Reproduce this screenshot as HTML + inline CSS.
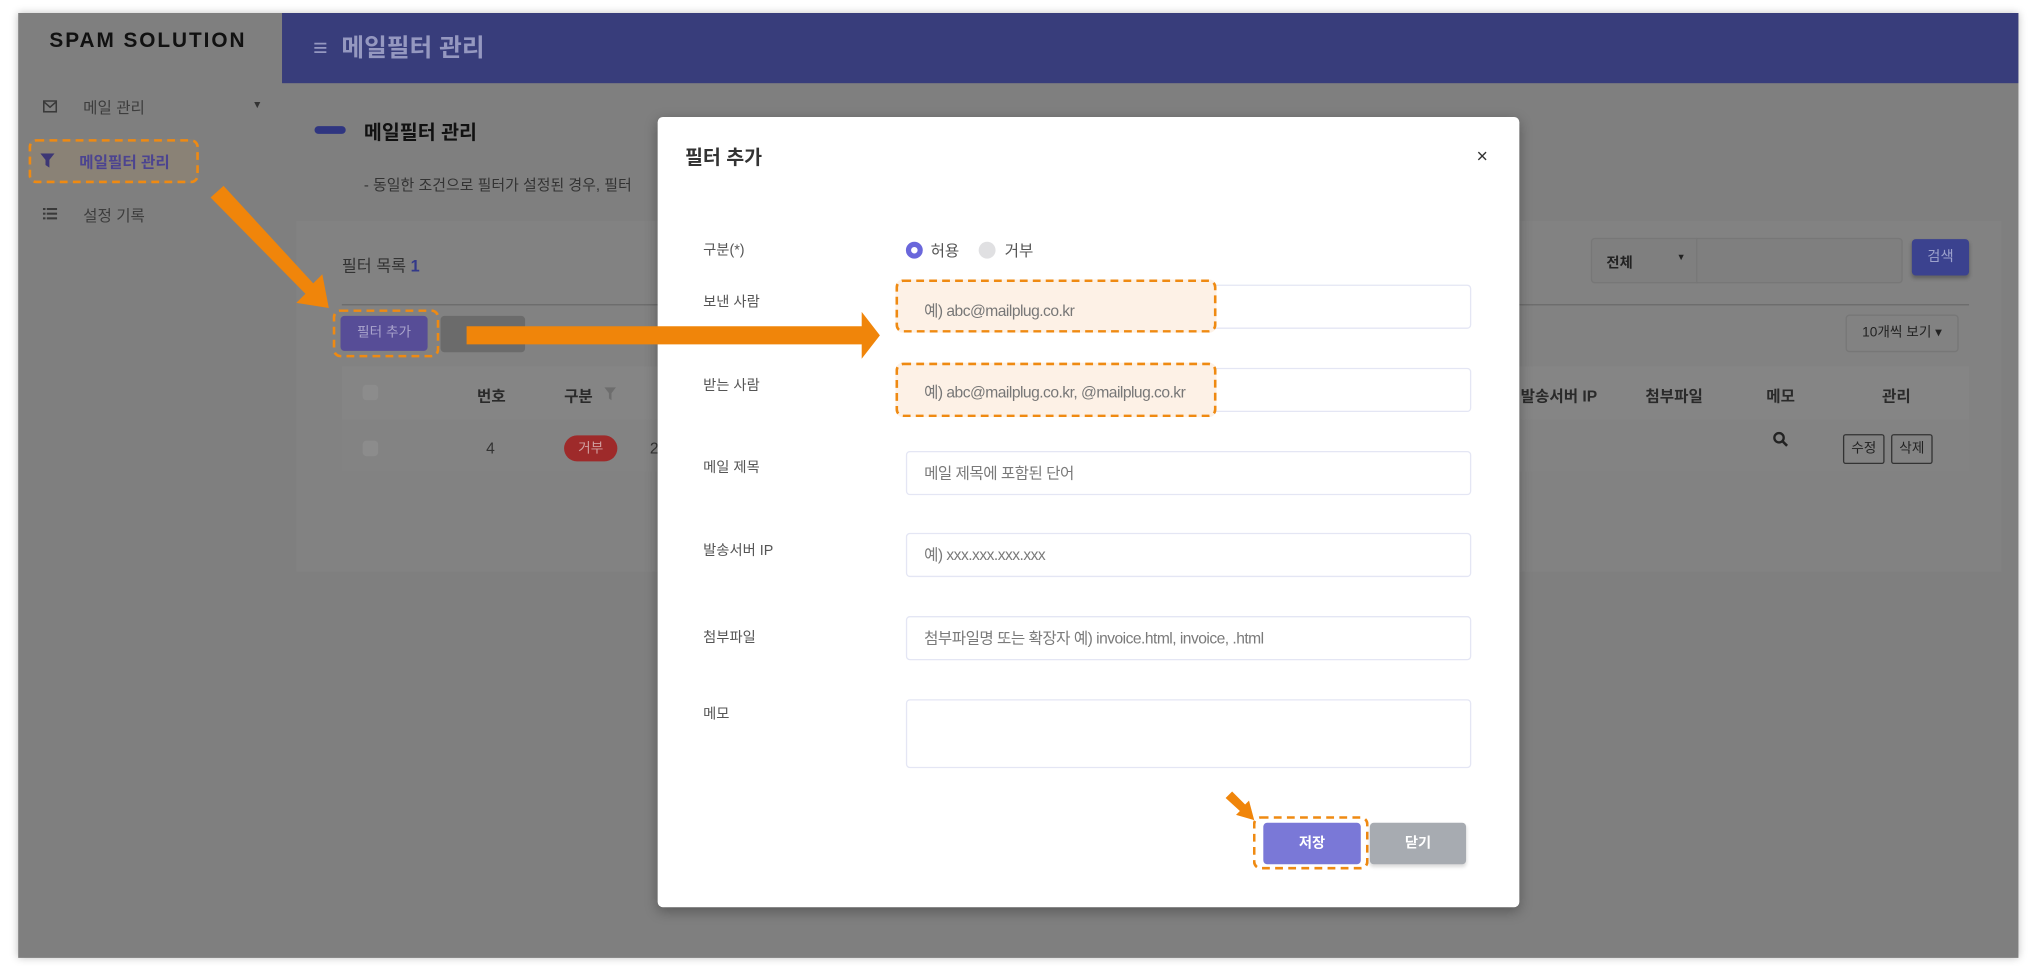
<!DOCTYPE html>
<html><head><meta charset="utf-8">
<style>
*{box-sizing:border-box;margin:0;padding:0}
html,body{width:2038px;height:971px;overflow:hidden;background:#fff}
body{font-family:"Liberation Sans","Noto Sans CJK KR",sans-serif}
#w{position:absolute;left:0;top:0;width:1568px;height:747px;transform:scale(1.2997);transform-origin:0 0}
.a{position:absolute}
.frame{left:14px;top:10px;width:1539px;height:727px;background:#7f7f7f;box-shadow:0 0 6px rgba(0,0,0,.25);overflow:hidden}
.t{position:absolute;white-space:nowrap}
.inp{position:absolute;left:191px;width:435px;height:34px;border:1px solid #e4e6f4;border-radius:3px;background:#fff;font-size:12px;letter-spacing:-0.4px;color:#7a7a7a;padding-left:13px;line-height:32px}
.lbl{position:absolute;left:35px;font-size:11px;color:#555}
.dash{position:absolute;border:2px dashed #ef8a12;border-radius:6px}
.ph{font-size:12px;letter-spacing:-0.4px;color:#777}
</style></head><body>
<div id="w">
<div class="a frame">
  <div class="t" style="left:24px;top:13px;font-size:16px;font-weight:bold;letter-spacing:1.5px;color:#111">SPAM SOLUTION</div>
  <div class="a" style="left:203px;top:0;width:1336px;height:54px;background:#383d7b"></div>
  <div class="t" style="left:227px;top:12px;font-size:19px;font-weight:bold;color:#9598c0">≡&nbsp; 메일필터 관리</div>
  <svg class="a" style="left:19px;top:67px" width="11" height="10" viewBox="0 0 11 10"><rect x="0.7" y="0.7" width="9.6" height="8.3" fill="none" stroke="#3a3a3a" stroke-width="1.2"/><path d="M1 1.5L5.5 5.5L10 1.5" fill="none" stroke="#3a3a3a" stroke-width="1.2"/></svg>
  <div class="t" style="left:50px;top:64px;font-size:12px;color:#3d3d3d">메일 관리</div>
  <div class="t" style="left:180px;top:66px;font-size:8px;color:#333">▼</div>
  <div class="dash" style="left:8px;top:97px;width:131px;height:34px;background:#8a8276"></div>
  <svg class="a" style="left:17px;top:108px" width="11" height="11" viewBox="0 0 11 11"><path d="M0 0H11L7 5V11L4 9V5Z" fill="#3d3775"/></svg>
  <div class="t" style="left:47px;top:106px;font-size:12px;font-weight:bold;color:#4c4490">메일필터 관리</div>
  <svg class="a" style="left:19px;top:150px" width="11" height="9" viewBox="0 0 11 9"><g fill="#3a3a3a"><rect x="0" y="0" width="2" height="1.6"/><rect x="3" y="0" width="8" height="1.6"/><rect x="0" y="3.6" width="2" height="1.6"/><rect x="3" y="3.6" width="8" height="1.6"/><rect x="0" y="7.2" width="2" height="1.6"/><rect x="3" y="7.2" width="8" height="1.6"/></g></svg>
  <div class="t" style="left:50px;top:147px;font-size:12px;color:#3d3d3d">설정 기록</div>
  <div class="a" style="left:228px;top:87px;width:24px;height:6px;border-radius:3px;background:#2f3580"></div>
  <div class="t" style="left:266px;top:81px;font-size:15px;font-weight:bold;color:#111">메일필터 관리</div>
  <div class="t" style="left:266px;top:124px;font-size:11.5px;color:#333">- 동일한 조건으로 필터가 설정된 경우, 필터</div>
  <div class="a" style="left:214px;top:160px;width:1312px;height:270px;background:#828282"></div>
  <div class="t" style="left:249px;top:184px;font-size:12.5px;color:#333">필터 목록 <b style="color:#33398a">1</b></div>
  <div class="a" style="left:249px;top:224px;width:1252px;height:1px;background:#6a6a6a"></div>
  <div class="a" style="left:1210px;top:173px;width:240px;height:35px;border:1px solid #777;border-radius:3px;background:#7f7f7f"></div>
  <div class="a" style="left:1291px;top:173px;width:1px;height:35px;background:#777"></div>
  <div class="t" style="left:1222px;top:184px;font-size:11px;font-weight:bold;color:#222">전체</div>
  <div class="t" style="left:1276px;top:185px;font-size:7px;color:#222">▼</div>
  <div class="a" style="left:1457px;top:174px;width:44px;height:28px;border-radius:3px;background:#3b428f;color:#9da2cc;font-size:11px;line-height:28px;text-align:center;box-shadow:0 2px 3px rgba(0,0,0,.25)">검색</div>
  <div class="a" style="left:1406px;top:232px;width:87px;height:29px;border:1px solid #777;border-radius:3px;font-size:10.5px;color:#222;line-height:27px;text-align:center">10개씩 보기 ▾</div>
  <div class="a" style="left:325px;top:233px;width:65px;height:28px;border-radius:3px;background:#6b6b6b"></div>
  <div class="dash" style="left:242px;top:228px;width:82px;height:37px"></div>
  <div class="a" style="left:248px;top:233px;width:67px;height:27px;border-radius:3px;background:#574d97;color:#aaa4cc;font-size:10.5px;line-height:27px;text-align:center">필터 추가</div>
  <div class="a" style="left:249px;top:272px;width:1252px;height:41px;background:#858585"></div>
  <div class="a" style="left:265px;top:286px;width:12px;height:12px;border-radius:3px;background:#8c8c8c"></div>
  <div class="t" style="left:353px;top:286px;font-size:12px;font-weight:bold;color:#2a2a2a">번호</div>
  <div class="t" style="left:420px;top:286px;font-size:12px;font-weight:bold;color:#2a2a2a">구분</div>
  <svg class="a" style="left:451px;top:288px" width="9" height="10" viewBox="0 0 9 10"><path d="M0 0H9L5.5 4.5V10L3.5 8.5V4.5Z" fill="#6d6d6d"/></svg>
  <div class="t" style="left:1156px;top:286px;font-size:12px;font-weight:bold;color:#2a2a2a">발송서버 IP</div>
  <div class="t" style="left:1252px;top:286px;font-size:12px;font-weight:bold;color:#2a2a2a">첨부파일</div>
  <div class="t" style="left:1345px;top:286px;font-size:12px;font-weight:bold;color:#2a2a2a">메모</div>
  <div class="t" style="left:1434px;top:286px;font-size:12px;font-weight:bold;color:#2a2a2a">관리</div>
  <div class="a" style="left:249px;top:313px;width:1252px;height:40px;background:#838383"></div>
  <div class="a" style="left:265px;top:329px;width:12px;height:12px;border-radius:3px;background:#8c8c8c"></div>
  <div class="t" style="left:360px;top:328px;font-size:12px;color:#333">4</div>
  <div class="a" style="left:420px;top:325px;width:41px;height:20px;border-radius:10px;background:#9e2a2a;color:#d0a0a0;font-size:10.5px;line-height:20px;text-align:center">거부</div>
  <div class="t" style="left:486px;top:328px;font-size:12px;color:#333">2</div>
  <svg class="a" style="left:1350px;top:322px" width="12" height="12" viewBox="0 0 12 12"><circle cx="4.8" cy="4.8" r="3.6" fill="none" stroke="#222" stroke-width="1.8"/><path d="M7.5 7.5L11 11" stroke="#222" stroke-width="2"/></svg>
  <div class="a" style="left:1404px;top:324px;width:32px;height:23px;border:1px solid #333;border-radius:2px;font-size:10.5px;color:#222;line-height:21px;text-align:center">수정</div>
  <div class="a" style="left:1441px;top:324px;width:32px;height:23px;border:1px solid #333;border-radius:2px;font-size:10.5px;color:#222;line-height:21px;text-align:center">삭제</div>
</div>
<div class="a" style="left:506px;top:90px;width:663px;height:608px;background:#fff;border-radius:4px;box-shadow:0 3px 10px rgba(0,0,0,.3)">
  <div class="t" style="left:21px;top:20px;font-size:15px;font-weight:bold;color:#333">필터 추가</div>
  <div class="t" style="left:630px;top:22px;font-size:15px;color:#333">×</div>
  <div class="lbl" style="top:94px">구분(*)</div>
  <div class="a" style="left:191px;top:96px;width:13px;height:13px;border-radius:50%;border:4px solid #6a67db;background:#fff"></div>
  <div class="t" style="left:210px;top:94px;font-size:12px;color:#555">허용</div>
  <div class="a" style="left:247px;top:96px;width:13px;height:13px;border-radius:50%;background:#e0e0e2"></div>
  <div class="t" style="left:267px;top:94px;font-size:12px;color:#555">거부</div>
  <div class="lbl" style="top:134px">보낸 사람</div>
  <div class="inp" style="top:129px"></div>
  <div class="dash" style="left:183px;top:125px;width:247px;height:41px;background:#fdf1e6"></div>
  <div class="t ph" style="left:205px;top:140px">예) abc@mailplug.co.kr</div>
  <div class="lbl" style="top:198px">받는 사람</div>
  <div class="inp" style="top:193px"></div>
  <div class="dash" style="left:183px;top:189px;width:247px;height:42px;background:#fdf1e6"></div>
  <div class="t ph" style="left:205px;top:203px">예) abc@mailplug.co.kr, @mailplug.co.kr</div>
  <div class="lbl" style="top:261px">메일 제목</div>
  <div class="inp" style="top:257px">메일 제목에 포함된 단어</div>
  <div class="lbl" style="top:325px">발송서버 IP</div>
  <div class="inp" style="top:320px">예) xxx.xxx.xxx.xxx</div>
  <div class="lbl" style="top:392px">첨부파일</div>
  <div class="inp" style="top:384px">첨부파일명 또는 확장자 예) invoice.html, invoice, .html</div>
  <div class="lbl" style="top:451px">메모</div>
  <div class="inp" style="top:448px;height:53px"></div>
  <div class="dash" style="left:458px;top:538px;width:89px;height:41px"></div>
  <div class="a" style="left:466px;top:543px;width:75px;height:32px;border-radius:3px;background:#7a78d7;color:#fff;font-size:11px;font-weight:bold;line-height:32px;text-align:center">저장</div>
  <div class="a" style="left:548px;top:543px;width:74px;height:32px;border-radius:3px;background:#a7abb1;color:#fff;font-size:11px;font-weight:bold;line-height:32px;text-align:center;box-shadow:0 2px 3px rgba(0,0,0,.15)">닫기</div>
</div>
<svg class="a" style="left:0;top:0" width="1568" height="747" viewBox="0 0 1568 747">
  <g fill="#f0850a">
    <path d="M162 152L172 143L241 218L248 211L253 237L228 233L235 226Z"/>
    <path d="M359 251H663V240L677 258L663 276V265H359Z"/>
    <path d="M943 614L948 609L958 619L961 616L965 631L951 627L954 624Z"/>
  </g>
</svg>
</div>
</body></html>
